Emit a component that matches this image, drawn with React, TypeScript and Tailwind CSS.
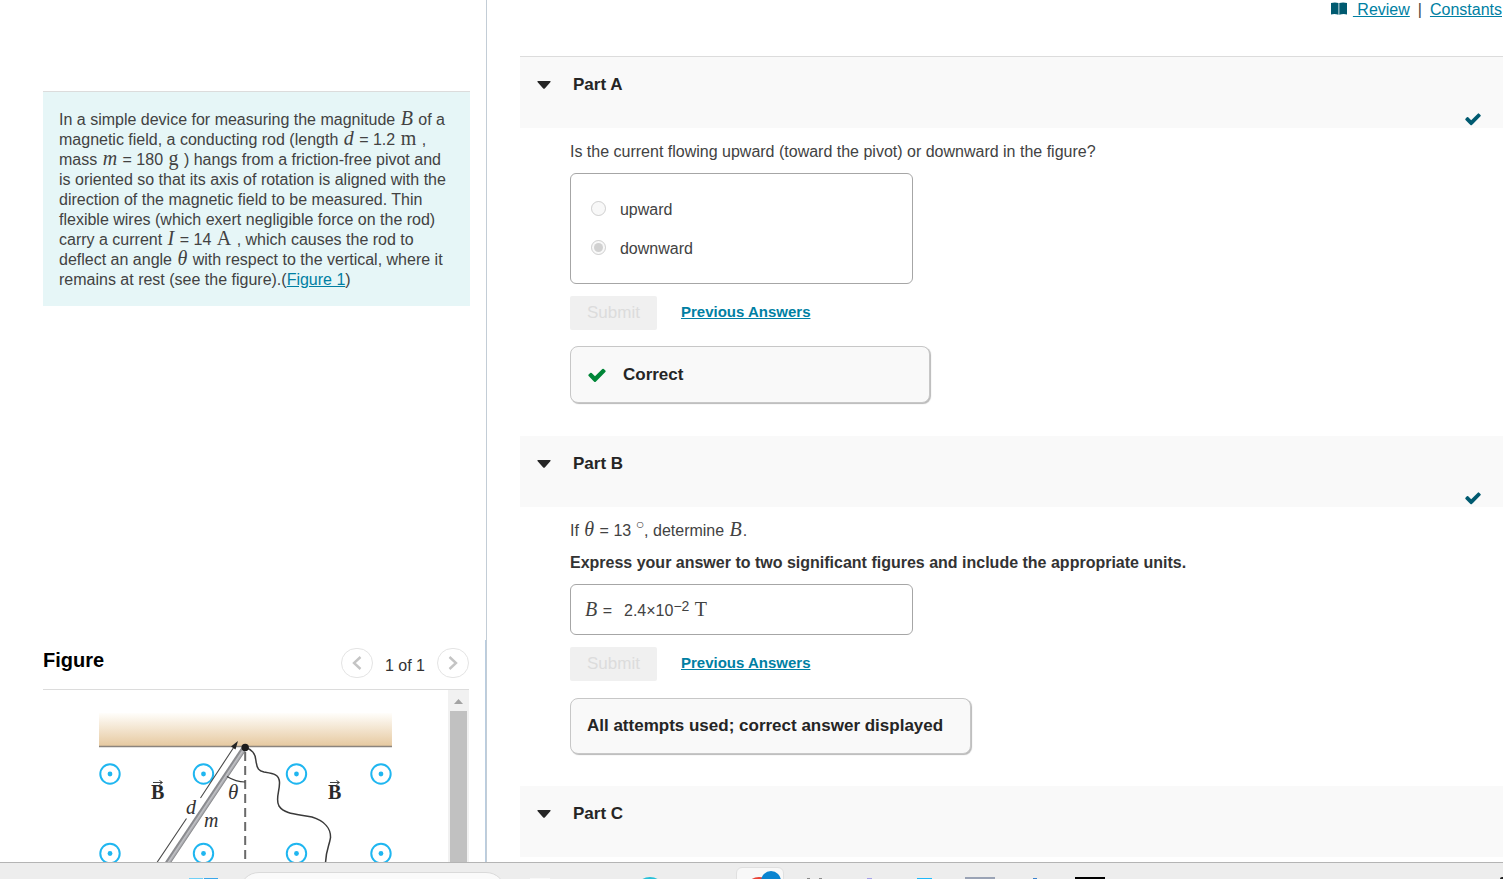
import type { ReactNode } from "react";

function CheckIcon({ className }: { className: string }) {
  return (
    <svg viewBox="0 0 1792 1792" className={className} fill="currentColor" aria-hidden="true">
      <path d="M1671 566q0 40-28 68l-724 724-136 136q-28 28-68 28t-68-28l-136-136-362-362q-28-28-28-68t28-68l136-136q28-28 68-28t68 28l294 295 656-657q28-28 68-28t68 28l136 136q28 28 28 68z" />
    </svg>
  );
}

function BookIcon() {
  return (
    <svg viewBox="0 0 16 13" className="h-[13px] w-4 text-[#005a70]" fill="currentColor" aria-hidden="true">
      <path d="M0 1 Q4 0 7.5 1 V12.8 Q4 11.4 0 12.4 Z" />
      <path d="M8.3 1 Q12 0 16 1 V12.4 Q12 11.4 8.3 12.8 Z" />
    </svg>
  );
}

function M({ children }: { children: ReactNode }) {
  return <span className="mx-px font-['Liberation_Serif',serif] text-xl leading-[0px]">{children}</span>;
}

function V({ children }: { children: ReactNode }) {
  return <i className="mx-px font-['Liberation_Serif',serif] text-xl leading-[0px]">{children}</i>;
}

function PartHeader({ title, done, first }: { title: string; done?: boolean; first?: boolean }) {
  return (
    <header
      className={
        first
          ? "flex h-[72px] justify-between border-t border-[#dcdcdc] bg-[#f9f9f9] pr-[21px] pl-[17px]"
          : "flex h-[71px] justify-between bg-[#f9f9f9] pr-[21px] pl-[17px]"
      }
    >
      <button className="flex h-14 items-center gap-[22px] text-[17px] font-bold text-[#252525]">
        <svg viewBox="0 0 14 8" className="h-2 w-[14px]" fill="currentColor" aria-hidden="true">
          <path d="M1 0 H13 Q14.2 0.2 13.3 1.2 L7.8 7.4 Q7 8.2 6.2 7.4 L0.7 1.2 Q-0.2 0.2 1 0 Z" />
        </svg>
        <h2>{title}</h2>
      </button>
      {done && <CheckIcon className="h-[18px] w-[18px] self-end text-[#005a70]" />}
    </header>
  );
}

function Actions() {
  return (
    <div className="flex items-center gap-6 pt-3">
      <button disabled className="h-[34px] w-[87px] rounded-xs bg-[#f0f0f0] text-[17px] text-[#dcdcdc]">
        Submit
      </button>
      <a href="#answers" className="pb-0.5 text-[15px] font-bold text-[#007fa3] underline">
        Previous Answers
      </a>
    </div>
  );
}

const noticeClass =
  "flex items-center rounded-lg border border-[#c7c7c7] bg-[#f9f9f9] px-4 text-[17px] font-bold text-[#252525] shadow-[1px_1px_1px_#b8b8b8]";

function FieldDot({ x, y }: { x: number; y: number }) {
  return (
    <g>
      <circle cx={x} cy={y} r="9.7" fill="#fff" stroke="#1fb6f0" strokeWidth="2" />
      <circle cx={x} cy={y} r="2.4" fill="#1fb6f0" />
    </g>
  );
}

function VectorB({ x }: { x: number }) {
  return (
    <g>
      <text x={x} y="799" fontFamily="Liberation Serif, serif" fontWeight="bold" fontSize="20" fill="#2a2a2a">
        B
      </text>
      <path d={`M${x + 2} 782.5 h9 m-2.500 -2 l3 2 l-3 2`} fill="none" stroke="#2a2a2a" strokeWidth="0.9" />
    </g>
  );
}

function RodFigure() {
  return (
    <svg viewBox="43 690 405 172" className="h-[172px] w-[405px]" role="img" aria-label="Rod hanging from a pivot in a magnetic field">
      <defs>
        <linearGradient id="ceiling" x1="0" y1="0" x2="0" y2="1">
          <stop offset="0" stopColor="#fffefb" />
          <stop offset="1" stopColor="#e6c9a0" />
        </linearGradient>
        <linearGradient id="rod" gradientUnits="userSpaceOnUse" x1="202.750" y1="805.500" x2="207.250" y2="808.500">
          <stop offset="0" stopColor="#85868a" />
          <stop offset="0.3" stopColor="#8f9094" />
          <stop offset="0.5" stopColor="#c4c5c9" />
          <stop offset="0.8" stopColor="#a4a5a9" />
          <stop offset="1" stopColor="#77787c" />
        </linearGradient>
      </defs>
      <rect x="99" y="713" width="293" height="33" fill="url(#ceiling)" />
      <path d="M99 746.5 H392" stroke="#8b847d" strokeWidth="1.4" />
      {[774, 853.5].map((y) => [110, 203.500, 296.5, 381].map((x) => <FieldDot key={`${x}-${y}`} x={x} y={y} />))}
      <path d="M245 747 L165 867" stroke="url(#rod)" strokeWidth="5.4" />
      <path d="M200.500 798 L234 747 M186.500 818.500 L156 864" stroke="#4b4b4b" strokeWidth="1.1" />
      <path d="M238 741 L231 746.500 L235.500 749.500 Z" fill="#222" />
      <path d="M245.200 752 V865" stroke="#6a6a6a" strokeWidth="2" strokeDasharray="9 5" />
      <path d="M227 776.500 Q236 782 245 782" fill="none" stroke="#3a3a3a" strokeWidth="1.200" />
      <path
        d="M245 747 C252 750 255.500 753 256 761 C257 769 259 771 264 772 C273 773.500 279 774 279.500 782 C280 791 275 799 279 806 C285 815 299 814 312 817 C325 821 331 829 330.500 838 C329 847 326 849 325.500 864"
        fill="none"
        stroke="#3a3a3a"
        strokeWidth="1.500"
      />
      <circle cx="245.200" cy="747.500" r="3.700" fill="#1b1b1b" />
      <VectorB x={151} />
      <VectorB x={328} />
      <g fontFamily="Liberation Serif, serif" fontStyle="italic" fontSize="20" fill="#333">
        <text x="186" y="814">d</text>
        <text x="204" y="827">m</text>
        <text x="228" y="799" fontSize="21">θ</text>
      </g>
    </svg>
  );
}

const pagerClass = "flex h-[30px] w-8 items-center justify-center rounded-full border border-[#e4e4e4] bg-white";

function FigurePane() {
  return (
    <section className="flex h-[222px] flex-col border-r border-[#b9cde0] pr-4 pl-[43px]">
      <div className="flex h-[50px] items-center justify-between border-b border-[#dcdcdc]">
        <h2 className="pb-2.5 text-xl font-bold text-black">Figure</h2>
        <div className="flex items-center gap-3 pb-1">
          <button aria-label="Previous figure" className={pagerClass}>
            <svg viewBox="0 0 10 14" className="h-[14px] w-[10px]" fill="none" stroke="#c4c4c4" strokeWidth="2.4" aria-hidden="true">
              <path d="M8.500 1 L2 7 L8.500 13" />
            </svg>
          </button>
          <span className="pt-1.5 text-base text-[#333]">1 of 1</span>
          <button aria-label="Next figure" className={pagerClass}>
            <svg viewBox="0 0 10 14" className="h-[14px] w-[10px]" fill="none" stroke="#c4c4c4" strokeWidth="2.4" aria-hidden="true">
              <path d="M1.500 1 L8 7 L1.500 13" />
            </svg>
          </button>
        </div>
      </div>
      <div className="flex min-h-0 flex-1 justify-between">
        <RodFigure />
        <div className="flex w-[21px] shrink-0 flex-col items-center bg-[#f1f1f1]">
          <div className="flex h-[21px] items-center pt-0.5">
            <svg viewBox="0 0 9 5" className="h-[5px] w-[9px]" fill="#a3a3a3" aria-hidden="true">
              <path d="M0 5 L4.500 0 L9 5 Z" />
            </svg>
          </div>
          <div className="w-[17px] flex-1 bg-[#c1c1c1]" />
        </div>
      </div>
    </section>
  );
}

function Cell({ children }: { children?: ReactNode }) {
  return <div className="flex h-4 w-[55px] shrink-0 items-end justify-center">{children}</div>;
}

function Taskbar() {
  return (
    <footer className="flex h-[17px] shrink-0 items-end overflow-hidden border-t border-[#b4b4b4] bg-[#ededed] pl-[189px]">
      <div className="flex h-px gap-px">
        <div className="w-[14px] bg-[#6fd0f7]" />
        <div className="w-[14px] bg-[#3aa7ea]" />
      </div>
      <div className="mt-[9px] mr-[6px] ml-[21px] h-10 w-[267px] shrink-0 self-start rounded-full border border-[#dadada] bg-[#fafafa]" />
      <Cell><div className="h-px w-5 bg-[#f8f8f8]" /></Cell>
      <Cell />
      <Cell><div className="mt-[14px] h-[30px] w-[30px] shrink-0 self-start rounded-full bg-[#27c0d8]" /></Cell>
      <Cell />
      <Cell>
        <div className="mt-1 flex h-10 w-12 shrink-0 justify-end self-start rounded-md border border-[#e0e0e0] bg-[#f8f8f8] pr-0.5">
          <div className="-mr-3 mt-[9px] h-7 w-7 shrink-0 rounded-full bg-[#e94235]" />
          <div className="mt-[3px] h-5 w-5 shrink-0 rounded-full bg-[#0a84d0]" />
        </div>
      </Cell>
      <Cell>
        <div className="flex h-px w-[15px] justify-between">
          <div className="w-[3px] bg-[#8a8a8a]" />
          <div className="w-[3px] bg-[#8a8a8a]" />
        </div>
      </Cell>
      <Cell><div className="h-px w-[5px] bg-[#a3a0e8]" /></Cell>
      <Cell><div className="h-px w-[15px] bg-[#1fb8fa]" /></Cell>
      <Cell><div className="h-0.5 w-[30px] bg-[#9aa3b5]" /></Cell>
      <Cell><div className="h-px w-1 bg-[#3b82cc]" /></Cell>
      <Cell><div className="h-0.5 w-[30px] bg-black" /></Cell>
      <div className="ml-auto h-0.5 w-[3px] rounded-tl-full bg-[#222]" />
    </footer>
  );
}

export default function App() {
  return (
    <div className="flex h-screen flex-col overflow-hidden bg-white font-['Liberation_Sans',Arial,sans-serif] text-base leading-5 text-[#424242]">
      <div className="flex min-h-0 flex-1">
        <aside className="flex w-[32.4%] shrink-0 flex-col justify-between border-r border-[#c3cdd6]">
          <div className="pt-[91px] pr-4 pl-[43px]">
            <p className="border-t border-[#dcdcdc] bg-[#e6f6f7] pt-[18px] pr-[18px] pb-4 pl-4">
              In a simple device for measuring the magnitude <V>B</V> of a magnetic field, a conducting rod (length{" "}
              <V>d</V> = 1.2 <M>m</M> , mass <V>m</V> = 180 <M>g</M> ) hangs from a friction-free pivot and is oriented
              so that its axis of rotation is aligned with the direction of the magnetic field to be measured. Thin
              flexible wires (which exert negligible force on the rod) carry a current <V>I</V> = 14 <M>A</M> , which
              causes the rod to deflect an angle <V>θ</V> with respect to the vertical, where it remains at rest (see
              the figure).(
              <a href="#figure" className="text-[#007fa3] underline">Figure 1</a>)
            </p>
          </div>
          <FigurePane />
        </aside>

        <main className="min-w-0 flex-1 overflow-hidden pl-[33px]">
          <nav className="flex h-14 justify-end gap-2 pr-px">
            <a href="#review" className="flex h-5 gap-1.5 text-[#007fa3]">
              <span className="pt-0.5"><BookIcon /></span>
              <span className="whitespace-pre underline"> Review</span>
            </a>
            <span>|</span>
            <a href="#constants" className="text-[#007fa3] underline">Constants</a>
          </nav>

          <section>
            <PartHeader title="Part A" done first />
            <div className="px-[50px] pt-[14px] pb-8">
              <p>Is the current flowing upward (toward the pivot) or downward in the figure?</p>
              <div className="mt-[11px] flex h-[111px] w-[343px] flex-col justify-center gap-[19px] rounded-md border border-[#a6a6a6] pt-0.5 pl-5">
                <label className="flex items-center gap-[14px]">
                  <input type="radio" name="direction" disabled className="mb-1 h-[15px] w-[15px]" />
                  upward
                </label>
                <label className="flex items-center gap-[14px]">
                  <input type="radio" name="direction" disabled defaultChecked className="mb-1 h-[15px] w-[15px]" />
                  downward
                </label>
              </div>
              <Actions />
              <div className="flex pt-4 pb-px">
                <div className={`${noticeClass} h-[57px] w-[360px] gap-4`}>
                  <CheckIcon className="h-5 w-5 text-[#008638]" />
                  Correct
                </div>
              </div>
            </div>
          </section>

          <section>
            <PartHeader title="Part B" done />
            <div className="px-[50px] pt-[14px] pb-8">
              <p>
                If <V>θ</V> = 13 <sup className="text-sm leading-[0px]">○</sup>, determine <V>B</V>.
              </p>
              <p className="mt-3 font-bold text-[#333]">
                Express your answer to two significant figures and include the appropriate units.
              </p>
              <div className="mt-[11px] flex h-[51px] w-[343px] items-center gap-3 rounded-md border border-[#a6a6a6] pt-0.5 pl-[13px]">
                <span><V>B</V> = </span>
                <span>2.4×10<sup className="static align-[5px] text-sm leading-[0px]">−2</sup> <M>T</M></span>
              </div>
              <Actions />
              <div className="flex pt-[17px]">
                <div className={`${noticeClass} h-14 w-[401px]`}>All attempts used; correct answer displayed</div>
              </div>
            </div>
          </section>

          <section>
            <PartHeader title="Part C" />
          </section>
        </main>
      </div>
      <Taskbar />
    </div>
  );
}
